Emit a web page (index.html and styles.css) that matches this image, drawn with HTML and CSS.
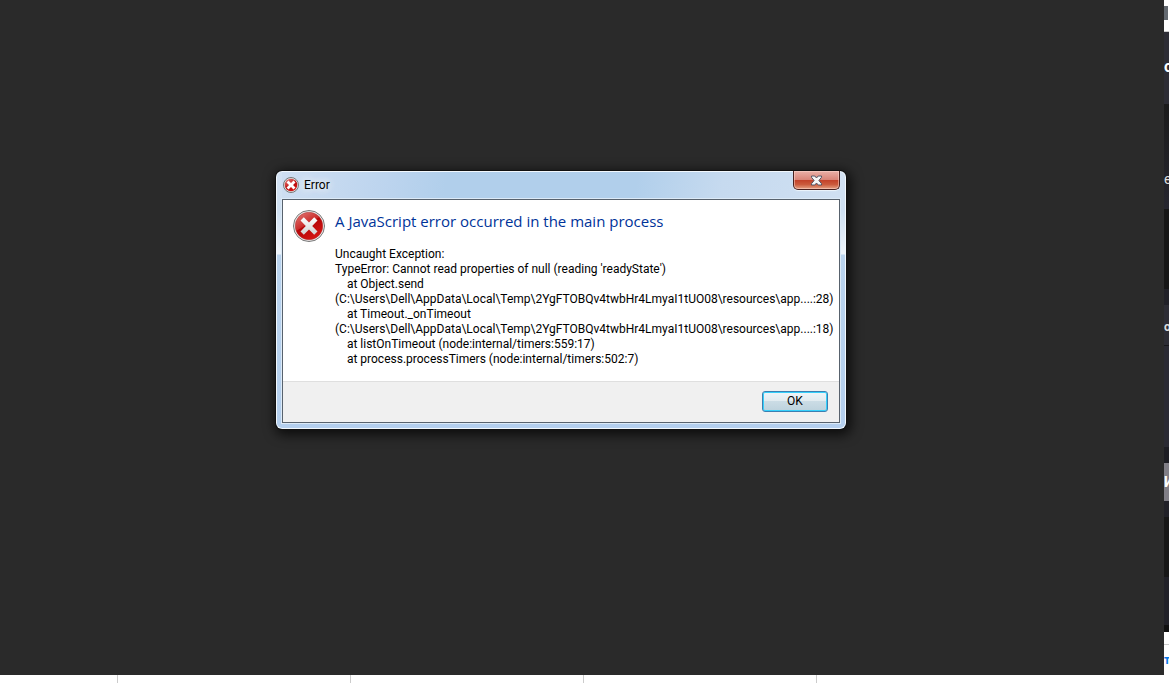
FILE: index.html
```
<!DOCTYPE html>
<html lang="en">
  <head>
    <meta charset="utf-8">
    <title>Error</title>
    <link rel="stylesheet" href="styles.css">
  </head>

  <body>
    <div class="desktop">
      <main class="app"></main>

      <aside class="behind">
        <div class="toolbar"></div>
        <div class="panel head">o</div>
        <div class="panel fade">e</div>
        <div class="panel black"></div>
        <div class="panel gap"></div>
        <div class="panel row">o</div>
        <div class="panel body"></div>
        <div class="panel dim"></div>
        <div class="panel active">И</div>
        <div class="panel gap"></div>
        <div class="panel low"></div>
        <div class="panel base"></div>
        <div class="panel edge"></div>
        <div class="panel rule"></div>
        <div class="panel link">т</div>
      </aside>

      <footer class="sheet">
        <span class="cell first"></span>
        <span class="cell"></span>
        <span class="cell"></span>
        <span class="cell"></span>
      </footer>
    </div>

    <section class="dialog" role="alertdialog" aria-labelledby="title" aria-describedby="message">
      <header class="titlebar">
        <svg class="icon-small" viewBox="0 0 32 32" aria-hidden="true">
          <defs>
            <linearGradient id="red" x1="0" y1="0" x2="0.6" y2="1">
              <stop offset="0" stop-color="#e3807b"/>
              <stop offset="0.5" stop-color="#cb2c2b"/>
              <stop offset="0.53" stop-color="#b40608"/>
              <stop offset="1" stop-color="#d51513"/>
            </linearGradient>
            <linearGradient id="cross" x1="0" y1="0" x2="0" y2="1">
              <stop offset="0" stop-color="#ffffff"/>
              <stop offset="1" stop-color="#d2d2d2"/>
            </linearGradient>
          </defs>
          <circle cx="16" cy="16" r="15" fill="#e4e4e4" stroke="#777" stroke-width="2"/>
          <circle cx="16" cy="16" r="12.500" fill="url(#red)"/>
          <path d="M7 11l4-4 5 5 5-5 4 4-5 5 5 5-4 4-5-5-5 5-4-4 5-5z" fill="#fff"/>
        </svg>
        <h1 id="title">Error</h1>
        <button class="close" type="button" aria-label="Close">
          <svg viewBox="0 0 13 11" aria-hidden="true">
            <path d="M1.5 1h3.300l1.700 2 1.700-2h3.300v1.300L8.900 5.500l2.600 3.200V10H8.200L6.500 8 4.800 10H1.500V8.700l2.600-3.200-2.600-3.200z" fill="#f6f6f6" stroke="#535666"/>
          </svg>
        </button>
      </header>

      <div class="client">
        <div class="content">
          <svg class="icon" viewBox="0 0 32 32" aria-hidden="true">
            <circle cx="16" cy="16" r="15.500" fill="#f1f1f1" stroke="#777"/>
            <circle cx="16" cy="16" r="13.800" fill="url(#red)" stroke="#a33" stroke-width="0.5"/>
            <path d="M7.500 10.500l3.300-3.200 5.200 5.200 5.200-5.200 3.300 3.200-5.300 5.500 5.300 5.500-3.300 3.200-5.200-5.200-5.200 5.200-3.300-3.200 5.300-5.500z" fill="url(#cross)"/>
          </svg>
          <div class="text">
            <h2>A JavaScript error occurred in the main process</h2>
            <p id="message">Uncaught Exception:
TypeError: Cannot read properties of null (reading 'readyState')
    at Object.send
(C:\Users\Dell\AppData\Local\Temp\2YgFTOBQv4twbHr4LmyaI1tUO08\resources\app....:28)
    at Timeout._onTimeout
(C:\Users\Dell\AppData\Local\Temp\2YgFTOBQv4twbHr4LmyaI1tUO08\resources\app....:18)
    at listOnTimeout (node:internal/timers:559:17)
    at process.processTimers (node:internal/timers:502:7)</p>
          </div>
        </div>
        <div class="actions">
          <button class="ok" type="button">OK</button>
        </div>
      </div>
    </section>
  </body>
</html>
```
FILE: styles.css
```
* {
  box-sizing: border-box;
}
body {
  margin: 0;
  height: 100vh;
  overflow: hidden;
  background: #fff;
  font-family: Roboto, "Liberation Sans", sans-serif;
  font-size: 12px;
}
h1,
h2,
p {
  margin: 0;
  font-weight: normal;
}
svg {
  display: block;
}

/* desktop */
.desktop {
  height: 100%;
  display: grid;
  grid-template-columns: 1fr 5px;
  grid-template-rows: 1fr 10px;
}
.app {
  background: #2a2a2a;
}
.behind {
  display: flex;
  flex-direction: column;
  overflow: hidden;
}
.toolbar {
  height: 32px;
  padding: 6px 1px 11px 0;
  border-bottom: 1px solid #ccc;
  background: #636970 content-box;
}
.panel {
  display: flex;
  align-items: center;
  color: #ddd;
}
.head {
  height: 72px;
  padding-bottom: 4px;
  background: #2d2d35;
  color: #fff;
  font-size: 16px;
  font-weight: bold;
}
.fade {
  height: 105px;
  padding-top: 44px;
  background: linear-gradient(#1b1b1b, #26262f);
  font-size: 14px;
}
.black {
  height: 80px;
  background: #161616;
}
.gap {
  height: 16px;
  background: #212128;
}
.row {
  height: 41px;
  padding-top: 4px;
  border-bottom: 1px solid #17171b;
  background: #2d2d35;
  font-weight: bold;
}
.body {
  height: 101px;
  background: #2a2a33;
}
.dim {
  height: 16px;
  background: #1d1d23;
}
.active {
  height: 38px;
  background: #807e86;
  color: #fff;
  font-size: 14px;
  font-weight: bold;
}
.low {
  height: 60px;
  background: #171717;
}
.base {
  height: 48px;
  background: #212128;
}
.edge {
  height: 7px;
  background: #111;
}
.rule {
  height: 13px;
  border-bottom: 1px solid #ccc;
}
.link {
  flex: 1;
  color: #0a7be8;
  font-weight: bold;
}
.sheet {
  grid-column: span 2;
  display: flex;
  padding-bottom: 2px;
}
.cell {
  width: 233px;
  border-right: 1px solid #ccc;
}
.first {
  width: 118px;
}

/* error dialog */
.dialog {
  position: absolute;
  left: 276px;
  top: 171px;
  width: 570px;
  padding: 0 6px 6px;
  border-radius: 6px;
  background:
    linear-gradient(#d3e2f3, #cfe0f2 40px, #eef5fb 83px, #b9d3ee 84px, #b4cfee) left / 6px no-repeat,
    linear-gradient(#d3e2f3, #cfe0f2 40px, #eef5fb 83px, #b9d3ee 84px, #b4cfee) right / 6px no-repeat,
    linear-gradient(100deg, #cfdff2, #bcd4ee 20%, #b1cfeb 30%, #b1cfeb 63%, #c6daef 78%, #d0e0f2) top / 100% 30px no-repeat,
    #b4cfee;
  box-shadow: inset 0 0 0 1px #f2f8fd, 0 0 0 1px #111, 2px 3px 12px 3px rgba(0, 0, 0, 0.7);
}
.titlebar {
  display: flex;
  align-items: center;
  gap: 5px;
  height: 28px;
  padding-left: 1px;
}
.icon-small {
  width: 16px;
  height: 16px;
}
.titlebar h1 {
  font-size: 12px;
  text-shadow: 0 0 8px #fff, 0 0 10px #fff;
}
.close {
  align-self: flex-start;
  display: flex;
  align-items: center;
  justify-content: center;
  width: 47px;
  height: 19px;
  margin-left: auto;
  padding: 0;
  border: 1px solid #49211f;
  border-top: 0;
  border-radius: 0 0 5px 5px;
  background: linear-gradient(#eab0a8, #da8578 48%, #c24028 50%, #cb5b3d 75%, #e5a184);
  box-shadow: inset 0 0 0 1px rgba(255, 220, 210, 0.5), 0 1px 1px #eef6fc;
}
.close svg {
  width: 13px;
  height: 11px;
}
.client {
  border: 1px solid #58626d;
  background: #fff;
  box-shadow: 0 0 0 1px #dceaf7;
}
.content {
  display: flex;
  gap: 10px;
  padding: 10px 8px 14px 10px;
}
.icon {
  flex: none;
  width: 32px;
  height: 32px;
}
.text h2 {
  margin-bottom: 15px;
  color: #039;
  font-family: "Open Sans", "Noto Sans", sans-serif;
  font-size: 15px;
  line-height: 22px;
}
.text p {
  font-size: 12px;
  line-height: 15px;
  white-space: pre;
}
.actions {
  display: flex;
  justify-content: flex-end;
  padding: 9px 11px 10px;
  border-top: 1px solid #dfdfdf;
  background: #f0f0f0;
}
.ok {
  width: 66px;
  height: 21px;
  padding: 0;
  border: 1px solid #3c7fb1;
  border-radius: 3px;
  background: linear-gradient(#f0f5f8, #e1ebf0 48%, #cbdce5 50%, #bdd2dd);
  box-shadow: inset 0 0 0 1px #35d0fb;
  font-family: inherit;
  font-size: 12px;
  line-height: 15px;
}
```
